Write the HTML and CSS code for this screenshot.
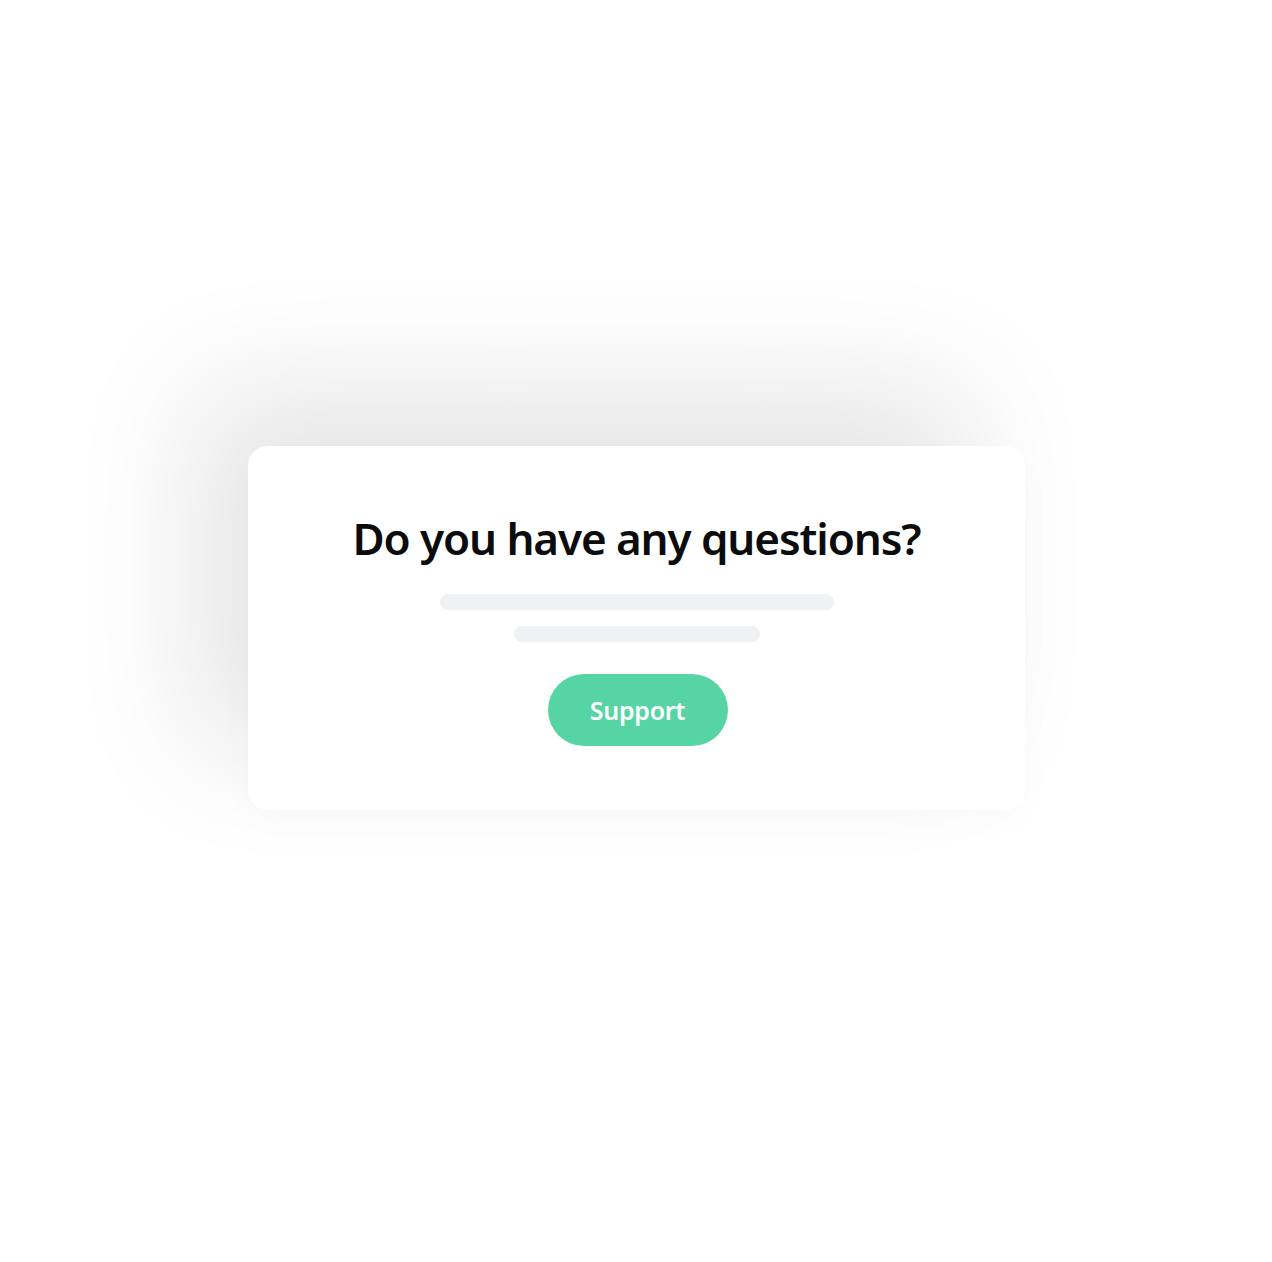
FILE: index.html
```html
<html>
<head>
	<title>Support</title>
	<link rel="stylesheet" href="styles.css">
</head>
<body>

<div class="stage">
	<div class="card">
		<h1 class="title">Do you have any questions?</h1>
		<div class="line line-long"></div>
		<div class="line line-short"></div>
		<a class="button" href="#">Support</a>
	</div>
</div>

</body>
</html>
```

FILE: styles.css
```css
    html, body {
        margin: 0;
        background: #FFFFFF;
    }
    .stage {
        display: flex;
        justify-content: center;
        padding-top: 446px;
        padding-left: 1px;
        height: 816px;
    }
    .card {
        width: 777px;
        height: 364px;
        box-sizing: border-box;
        padding-top: 62px;
        background: #FFFFFF;
        border-radius: 20px;
        box-shadow: -55px -60px 125px rgba(0, 0, 0, 0.1),
                    0 12px 40px rgba(0, 0, 0, 0.02);
        display: flex;
        flex-direction: column;
        align-items: center;
    }
    .title {
        margin: 0;
        font-family: "Noto Sans", sans-serif;
        font-weight: 600;
        font-size: 44px;
        line-height: 60px;
        color: #0C0C0C;
        letter-spacing: -1.1px;
    }
    .line {
        height: 16px;
        border-radius: 8px;
        background: #F0F1F3;
    }
    .line-long {
        width: 394px;
        margin-top: 26px;
    }
    .line-short {
        width: 246px;
        margin-top: 16px;
    }
    .button {
        margin-top: 32px;
        margin-left: 2px;
        width: 180px;
        height: 72px;
        border-radius: 36px;
        background: #57D4A4;
        color: #FFFFFF;
        font-family: "Noto Sans", sans-serif;
        font-weight: 600;
        font-size: 25px;
        letter-spacing: -0.3px;
        text-decoration: none;
        display: flex;
        align-items: center;
        justify-content: center;
    }
```
